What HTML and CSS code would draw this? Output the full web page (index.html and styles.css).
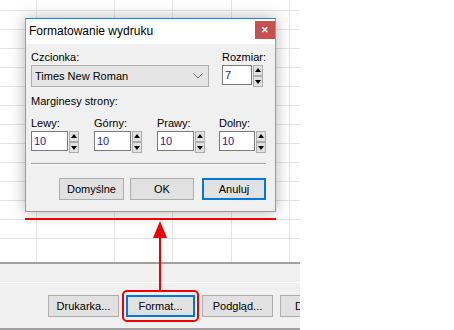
FILE: index.html
```html
<!DOCTYPE html>
<html lang="pl">

<head>
    <meta charset="UTF-8">
    <meta name="viewport" content="width=device-width, initial-scale=1.0">
    <title>Formatowanie wydruku</title>
    <link rel="stylesheet" href="styles.css">
</head>

<body>
    <div class="screen">
        <div class="sheet">
            <div class="grid">
                <div class="col c1"></div>
                <div class="col c2"></div>
                <div class="col c3"></div>
                <div class="col c4"></div>
                <div class="col c5"></div>
            </div>
            <div class="toolbar">
                <div class="toolbar-strip"></div>
                <div class="toolbar-buttons">
                    <button class="btn w71">Drukarka...</button>
                    <button class="btn btn-focus w69">Format...</button>
                    <button class="btn w71">Podgląd...</button>
                    <button class="btn w71">Drukuj...</button>
                </div>
            </div>
        </div>

        <!-- okno dialogowe -->
        <div class="dialog">
            <div class="titlebar">
                <span class="title">Formatowanie wydruku</span>
                <span class="close">&#x2715;</span>
            </div>
            <div class="dialog-body">
                <div class="row-font">
                    <div class="field-font">
                        <label>Czcionka:</label>
                        <div class="combo">
                            <span>Times New Roman</span>
                            <svg width="10" height="6" viewBox="0 0 10 6">
                                <path d="M0.5 0.5 L5 5 L9.5 0.5" fill="none" stroke="#6b6b6b" stroke-width="1"/>
                            </svg>
                        </div>
                    </div>
                    <div class="field-size">
                        <label>Rozmiar:</label>
                        <div class="spin">
                            <input class="spin-input w30" type="text" value="7">
                            <div class="spin-btns">
                                <span class="spin-btn up"></span>
                                <span class="spin-btn down"></span>
                            </div>
                        </div>
                    </div>
                </div>

                <div class="group-label">Marginesy strony:</div>

                <div class="margins">
                    <div class="margin">
                        <label>Lewy:</label>
                        <div class="spin">
                            <input class="spin-input" type="text" value="10">
                            <div class="spin-btns">
                                <span class="spin-btn up"></span>
                                <span class="spin-btn down"></span>
                            </div>
                        </div>
                    </div>
                    <div class="margin">
                        <label>Górny:</label>
                        <div class="spin">
                            <input class="spin-input" type="text" value="10">
                            <div class="spin-btns">
                                <span class="spin-btn up"></span>
                                <span class="spin-btn down"></span>
                            </div>
                        </div>
                    </div>
                    <div class="margin">
                        <label>Prawy:</label>
                        <div class="spin">
                            <input class="spin-input" type="text" value="10">
                            <div class="spin-btns">
                                <span class="spin-btn up"></span>
                                <span class="spin-btn down"></span>
                            </div>
                        </div>
                    </div>
                    <div class="margin">
                        <label>Dolny:</label>
                        <div class="spin">
                            <input class="spin-input w36" type="text" value="10">
                            <div class="spin-btns">
                                <span class="spin-btn up"></span>
                                <span class="spin-btn down"></span>
                            </div>
                        </div>
                    </div>
                </div>

                <div class="separator"></div>

                <div class="dialog-buttons">
                    <button class="btn w65">Domyślne</button>
                    <button class="btn w64 ok">OK</button>
                    <button class="btn btn-focus w64">Anuluj</button>
                </div>
            </div>
        </div>

        <!-- adnotacje -->
        <div class="mark-line"></div>
        <svg class="mark-arrow" width="20" height="74" viewBox="0 0 20 74">
            <line x1="10" y1="16" x2="10" y2="72" stroke="#f00000" stroke-width="2"/>
            <polygon points="10,2 3,19 17,19" fill="#f00000"/>
        </svg>
        <div class="mark-box"></div>
    </div>
</body>

</html>
```

FILE: styles.css
```css
body {
    margin: 0;
    background-color: #fff;
    font-family: "Liberation Sans", Arial, sans-serif;
    font-size: 11px;
    color: #000;
}

.screen {
    position: relative;
    width: 454px;
    height: 330px;
    overflow: hidden;
}

/* arkusz w tle */
.sheet {
    width: 300px;
    height: 330px;
    display: flex;
    flex-direction: column;
    overflow: hidden;
}

.grid {
    height: 262px;
    display: flex;
    background: repeating-linear-gradient(to bottom, transparent 0 18px, #e4e4e4 18px 19px);
    background-position: 0 -8px;
}

.col {
    border-right: 1px solid #e4e4e4;
    flex-shrink: 0;
}

.c1 { width: 36px; }
.c2 { width: 77px; }
.c3 { width: 57px; }
.c4 { width: 58px; }
.c5 { width: 57px; }

.toolbar {
    flex: 1;
    background-color: #f0f0f0;
    border-top: 2px solid #a0a0a0;
    border-bottom: 2px solid #a0a0a0;
}

.toolbar-strip {
    height: 18px;
    border-bottom: 1px solid #fff;
}

.toolbar-buttons {
    display: flex;
    gap: 7px;
    padding: 12px 0 0 48px;
}

/* przyciski */
.btn {
    height: 22px;
    padding: 0;
    background-color: #e1e1e1;
    border: 1px solid #adadad;
    font-family: "Liberation Sans", Arial, sans-serif;
    font-size: 11px;
    color: #000;
    flex-shrink: 0;
}

.btn-focus {
    border: 2px solid #0078d7;
}

.w64 { width: 64px; }
.w65 { width: 65px; }
.w69 { width: 69px; }
.w71 { width: 71px; }

/* okno dialogowe */
.dialog {
    position: absolute;
    left: 25px;
    top: 18px;
    width: 249px;
    height: 192px;
    border: 1px solid #9a9a9a;
    border-top: 1px solid #1883d7;
    background-color: #f0f0f0;
    box-shadow: 0 0 14px rgba(0, 0, 0, 0.3);
}

.titlebar {
    height: 25px;
    background-color: #fff;
    display: flex;
    justify-content: space-between;
    align-items: flex-start;
}

.title {
    font-size: 12px;
    line-height: 25px;
    padding-left: 3px;
}

.close {
    width: 20px;
    height: 18px;
    margin-top: 2px;
    background-color: #c75050;
    color: #fff;
    font-size: 9px;
    font-weight: bold;
    line-height: 18px;
    text-align: center;
}

.dialog-body {
    padding: 7px 9px 0 5px;
}

label {
    display: block;
    line-height: 12px;
    margin-bottom: 2px;
}

.row-font {
    display: flex;
}

.field-font {
    width: 181px;
}

.field-size {
    margin-left: 13px;
}

.combo {
    height: 20px;
    border: 1px solid #adadad;
    background-color: #e5e5e5;
    display: flex;
    align-items: center;
    justify-content: space-between;
    padding: 0 5px 0 3px;
}

.spin {
    display: flex;
    gap: 1px;
}

.spin-input {
    width: 33px;
    height: 18px;
    padding: 0 0 0 2px;
    margin: 0;
    border: 1px solid #7a7a7a;
    background-color: #fff;
    font-family: "Liberation Sans", Arial, sans-serif;
    font-size: 11px;
    color: #1e1e96;
}

.w30 { width: 26px; }
.w36 { width: 32px; }

.spin-btns {
    display: flex;
    flex-direction: column;
    justify-content: space-between;
    height: 22px;
}

.spin-btn {
    position: relative;
    width: 8px;
    height: 9px;
    border: 1px solid #adadad;
    background-color: #e1e1e1;
}

.spin-btn::after {
    content: "";
    position: absolute;
    left: 1px;
    border-left: 3px solid transparent;
    border-right: 3px solid transparent;
}

.spin-btn.up::after {
    top: 2px;
    border-bottom: 4px solid #000;
}

.spin-btn.down::after {
    top: 3px;
    border-top: 4px solid #000;
}

.group-label {
    line-height: 12px;
    margin-top: 8px;
}

.margins {
    display: grid;
    grid-template-columns: 63px 63px 62px auto;
    margin-top: 10px;
}

.separator {
    margin-top: 10px;
    height: 1px;
    background-color: #a0a0a0;
    border-bottom: 1px solid #fff;
}

.dialog-buttons {
    display: flex;
    justify-content: flex-end;
    margin-top: 13px;
}

.dialog-buttons .ok {
    margin: 0 8px 0 6px;
}

/* czerwone adnotacje */
.mark-line {
    position: absolute;
    left: 25px;
    top: 218px;
    width: 251px;
    height: 2px;
    background-color: #f00000;
}

.mark-arrow {
    position: absolute;
    left: 150px;
    top: 219px;
}

.mark-box {
    position: absolute;
    left: 122px;
    top: 290px;
    width: 73px;
    height: 28px;
    border: 2px solid #f00000;
    border-radius: 5px;
}
```
